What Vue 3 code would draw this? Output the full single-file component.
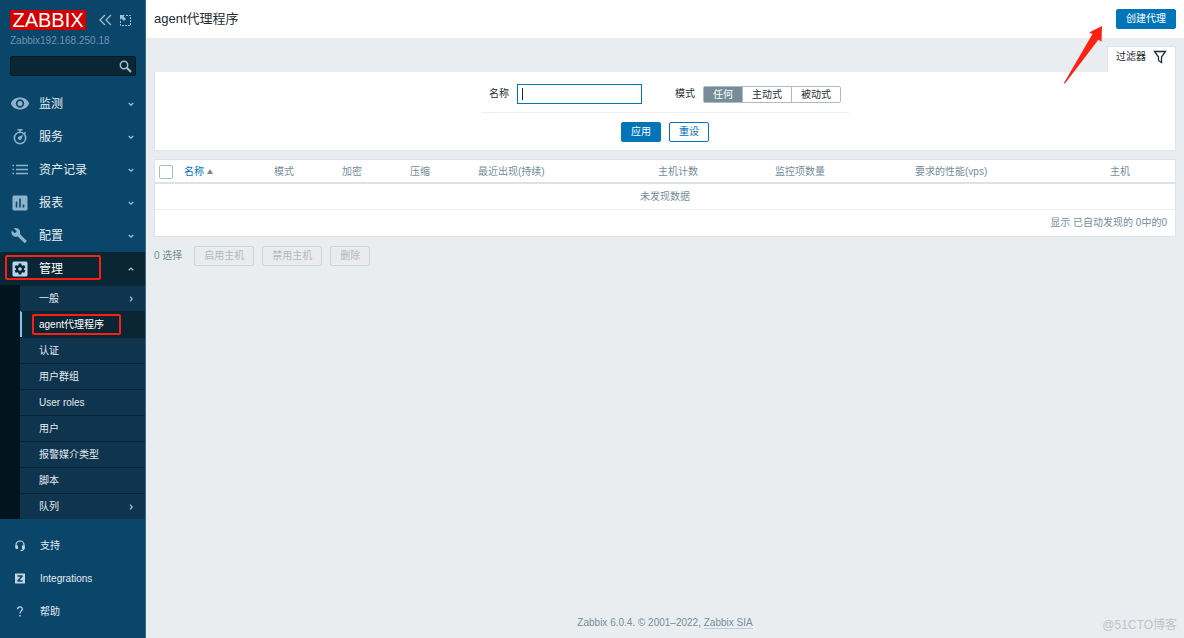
<script setup>
import { ref } from 'vue'

const menu = [
  { icon: 'eye', label: '监测' },
  { icon: 'timer', label: '服务' },
  { icon: 'list', label: '资产记录' },
  { icon: 'chart', label: '报表' },
  { icon: 'wrench', label: '配置' },
  { icon: 'gear', label: '管理', open: true },
]
const submenu = [
  { label: '一般', more: true },
  { label: 'agent代理程序', active: true },
  { label: '认证' },
  { label: '用户群组' },
  { label: 'User roles' },
  { label: '用户' },
  { label: '报警媒介类型' },
  { label: '脚本' },
  { label: '队列', more: true },
]
const support = [
  { icon: 'headset', label: '支持' },
  { icon: 'z', label: 'Integrations' },
  { icon: 'help', label: '帮助' },
]
const modes = ['任何', '主动式', '被动式']
const columns = ['模式', '加密', '压缩', '最近出现(持续)', '主机计数', '监控项数量', '要求的性能(vps)', '主机']
const mode = ref('任何')
const name = ref('')
const search = ref('')
</script>

<template>
  <div class="page">
    <aside class="sidebar">
      <div class="brand">
        <a href="#" class="logo">ZABBIX</a>
        <button class="icon-btn collapse" aria-label="Collapse sidebar">
          <svg width="13" height="12" viewBox="0 0 13 12"><path d="M6 1 1 6l5 5M12 1 7 6l5 5" fill="none" stroke="currentColor" stroke-width="1.2" /></svg>
        </button>
        <button class="icon-btn" aria-label="Hide sidebar">
          <svg width="11" height="11" viewBox="0 0 11 11">
            <path d="M6 .5h4.500v10H.5V6" fill="none" stroke="currentColor" stroke-dasharray="2 1" />
            <path d="M0 0h5L3.500 1.500 6 4 4 6 1.500 3.500 0 5z" fill="currentColor" />
          </svg>
        </button>
      </div>
      <div class="server">Zabbix192.168.250.18</div>
      <form class="search" @submit.prevent>
        <input v-model="search" type="text" aria-label="Search" />
        <button class="icon-btn" aria-label="Run search">
          <svg width="13" height="13" viewBox="0 0 13 13" fill="none" stroke="currentColor"><circle cx="5" cy="5" r="3.700" stroke-width="1.500" /><path d="m7.800 7.800 4.200 4.200" stroke-width="2" /></svg>
        </button>
      </form>

      <nav>
        <ul class="menu">
          <li v-for="m in menu" :key="m.label" :class="{ open: m.open }">
            <a href="#" class="menu-link">
              <svg v-if="m.icon === 'eye'" class="icon" viewBox="0 0 20 20"><path fill="currentColor" fill-rule="evenodd" d="M10 3.500C5.500 3.500 2.200 5.700.8 9.500c1.400 3.800 4.700 6 9.200 6s7.800-2.200 9.200-6C17.800 5.700 14.500 3.500 10 3.500zm0 1.800a4.200 4.200 0 1 1 0 8.400 4.200 4.200 0 0 1 0-8.400z" /><circle cx="10" cy="9.500" r="2.500" fill="currentColor" /></svg>
              <svg v-else-if="m.icon === 'timer'" class="icon" viewBox="0 0 20 20"><g fill="none" stroke="currentColor" stroke-width="1.600"><circle cx="10" cy="11" r="5.700" /><path d="M7.500 2.800h5M10 3v2.500M14.200 6.800l1.400-1.400" /></g><path d="m13 8-1.400 4a1.900 1.900 0 1 1-2.600-2.600z" fill="currentColor" /></svg>
              <svg v-else-if="m.icon === 'list'" class="icon" viewBox="0 0 20 20"><path d="M2.500 5.500H4M2.500 9.500H4M2.500 13.500H4M6 5.500h12M6 9.500h12M6 13.500h12" stroke="currentColor" stroke-width="1.600" /></svg>
              <svg v-else-if="m.icon === 'chart'" class="icon" viewBox="0 0 20 20"><path fill="currentColor" fill-rule="evenodd" d="M4 2.500h12A1.500 1.500 0 0 1 17.500 4v12a1.500 1.500 0 0 1-1.500 1.500H4A1.500 1.500 0 0 1 2.500 16V4A1.500 1.500 0 0 1 4 2.500zm1.700 6v6h1.600v-6zm3.500-3v9h1.600v-9zm3.500 6v3h1.600v-3z" /></svg>
              <svg v-else-if="m.icon === 'wrench'" class="icon" viewBox="0 0 20 20"><path fill="currentColor" d="m17.600 15.200-6.500-6.400c.7-1.700.3-3.600-1-4.900C8.700 2.500 6.700 2.300 5.100 3.100L8 6 6 8 3 5.200C2.200 6.800 2.500 8.800 3.900 10.200c1.300 1.300 3.300 1.700 5 1l6.500 6.300c.3.300.7.300 1 0l1.300-1.400c.3-.3.300-.7-.1-.9z" transform="translate(-1.200 -.7)" /></svg>
              <svg v-else class="icon" viewBox="0 0 20 20"><rect x="2.500" y="2.500" width="15" height="15" rx="1.500" fill="currentColor" /><g stroke="#0a2635" stroke-width="2.800"><path d="M10 4.500v11M5.200 7.200l9.600 5.600M14.800 7.200l-9.600 5.600" /></g><circle cx="10" cy="10" r="4" fill="#0a2635" /><circle cx="10" cy="10" r="1.800" fill="currentColor" /></svg>
              <span>{{ m.label }}</span>
              <svg class="arrow" viewBox="0 0 6 6"><path :d="m.open ? 'M.7 4.200 3 2l2.300 2.200' : 'M.7 2 3 4.200 5.300 2'" fill="none" stroke="currentColor" stroke-width="1.200" /></svg>
            </a>
            <i v-if="m.open" class="mark mark-section"></i>
            <ul v-if="m.open" class="submenu">
              <li v-for="s in submenu" :key="s.label" :class="{ active: s.active }">
                <a href="#">{{ s.label }}
                  <svg v-if="s.more" class="arrow" viewBox="0 0 6 6"><path d="M2 .7 4.200 3 2 5.300" fill="none" stroke="currentColor" stroke-width="1.200" /></svg>
                </a>
                <i v-if="s.active" class="mark mark-page"></i>
              </li>
            </ul>
          </li>
        </ul>
      </nav>

      <ul class="menu support">
        <li v-for="s in support" :key="s.label">
          <a href="#" class="menu-link">
            <svg v-if="s.icon === 'headset'" class="icon" viewBox="0 0 20 20"><path d="M6 10.500V9a4 4 0 0 1 8 0v3c0 1.800-1 2.500-3.500 2.500" fill="none" stroke="currentColor" stroke-width="1.200" /><path d="M5.300 9.500H8V13H6.600a1.300 1.300 0 0 1-1.300-1.300zM14.700 9.500H12V13h2.700z" fill="currentColor" /></svg>
            <svg v-else-if="s.icon === 'z'" class="icon" viewBox="0 0 20 20"><path d="M5 4.500h10v10H5z" fill="currentColor" /><path d="M7.500 7h4.800L7.700 12h4.800" fill="none" stroke="#0a466a" stroke-width="1.500" stroke-linejoin="bevel" /></svg>
            <svg v-else class="icon" viewBox="0 0 20 20"><path d="M7.600 7.200C7.700 4 12.400 4.200 12.300 7c0 1.900-2.300 2-2.300 4.500" fill="none" stroke="currentColor" stroke-width="1.300" /><path d="M9.300 13h1.400v1.500H9.300z" fill="currentColor" /></svg>
            <span>{{ s.label }}</span>
          </a>
        </li>
      </ul>
    </aside>

    <div class="wrapper">
      <header class="header">
        <h1>agent代理程序</h1>
        <button class="btn primary">创建代理</button>
        <svg class="pointer" width="40" height="58" viewBox="0 0 40 58"><path d="M39 0 26 6.500 29.500 8 1 57 1.800 57.700 35.500 13.500 38.500 16z" fill="#ff2012" /></svg>
      </header>

      <main>
        <div class="tabs">
          <a href="#" class="filter-tab">过滤器
            <svg width="14" height="14" viewBox="0 0 14 14"><path d="M1.500 1.500h11L8.500 7v5.500l-3-2V7z" fill="none" stroke="currentColor" stroke-width="1.300" /></svg>
          </a>
        </div>
        <form class="filter" @submit.prevent>
          <div class="fields">
            <label for="filter-name">名称</label>
            <input id="filter-name" v-model="name" class="name" type="text" />
            <span id="mode-label" class="mode-label">模式</span>
            <div class="segments" role="radiogroup" aria-labelledby="mode-label">
              <label v-for="m in modes" :key="m" :class="{ checked: mode === m }">
                <input v-model="mode" type="radio" name="mode" :value="m" />{{ m }}
              </label>
            </div>
          </div>
          <div class="actions">
            <button class="btn primary">应用</button>
            <button class="btn" type="reset">重设</button>
          </div>
        </form>

        <table>
          <colgroup>
            <col class="c-check" /><col class="c-name" /><col class="c-short" /><col class="c-short" /><col class="c-short" />
            <col class="c-seen" /><col class="c-hosts" /><col class="c-items" /><col /><col class="c-last" />
          </colgroup>
          <thead>
            <tr>
              <th><input type="checkbox" aria-label="全选" /></th>
              <th><a href="#">名称<i class="sort"></i></a></th>
              <th v-for="c in columns" :key="c">{{ c }}</th>
            </tr>
          </thead>
          <tbody>
            <tr><td colspan="10" class="empty">未发现数据</td></tr>
            <tr><td colspan="10" class="total">显示 已自动发现的 0中的0</td></tr>
          </tbody>
        </table>

        <div class="bulk">
          <span>0 选择</span>
          <button class="btn" disabled>启用主机</button>
          <button class="btn" disabled>禁用主机</button>
          <button class="btn" disabled>删除</button>
        </div>
      </main>

      <footer>
        Zabbix 6.0.4. © 2001–2022, <a href="#">Zabbix SIA</a>
        <span class="watermark">@51CTO博客</span>
      </footer>
    </div>
  </div>
</template>

<style>
body {
  background: #e9edf0;
}
</style>

<style scoped>
* {
  box-sizing: border-box;
}
.page {
  display: flex;
  min-height: 100vh;
  background: #e9edf0;
  color: #1f2c33;
  font: 10px/14px "Liberation Sans", "Noto Sans CJK SC", sans-serif;
}
a {
  color: inherit;
  text-decoration: none;
}
ul {
  margin: 0;
  padding: 0;
  list-style: none;
}
button,
input {
  margin: 0;
  font: inherit;
}

.sidebar {
  display: flex;
  flex-direction: column;
  flex: none;
  width: 146px;
  padding: 10px 0;
  background: #0a466a;
  border-right: 1px solid #3a6a87;
  color: #e4ebf0;
}
.brand {
  display: flex;
  align-items: center;
  padding: 0 14px 0 10px;
}
.logo {
  width: 76px;
  background: #d40000;
  color: #fff;
  font-size: 20px;
  line-height: 20px;
  text-align: center;
}
.icon-btn {
  display: flex;
  padding: 0;
  border: 0;
  background: none;
  color: #9fc0d4;
}
.collapse {
  margin: 0 8px 0 auto;
}
.server {
  margin: 4px 10px 8px;
  color: #6d95ad;
}
.search {
  display: flex;
  align-items: center;
  margin: 0 9px 11px 10px;
  padding-right: 3px;
  height: 20px;
  background: #0a2635;
  border: 1px solid #061a26;
  border-radius: 2px;
}
.search input {
  flex: 1;
  min-width: 0;
  border: 0;
  background: none;
  color: #fff;
  outline: 0;
}
.menu > li {
  position: relative;
}
.menu-link {
  display: flex;
  align-items: center;
  height: 33px;
  padding: 0 11px 0 10px;
  font-size: 12px;
}
.icon {
  width: 20px;
  height: 20px;
  margin-right: 9px;
  color: #8fb3ca;
}
.arrow {
  width: 6px;
  height: 6px;
  margin-left: auto;
  color: #a9c3d3;
}
.open > .menu-link {
  background: #0a2635;
  color: #fff;
}
.open > .menu-link .icon {
  color: #b9d7ea;
}
.submenu {
  border-left: 20px solid #04141e;
  background: #0f344e;
}
.submenu li {
  position: relative;
}
.submenu a {
  display: flex;
  align-items: center;
  height: 26px;
  padding: 0 11px 0 19px;
  border-top: 1px solid #0a2635;
}
.submenu .active a {
  padding-left: 17px;
  background: #0a2635;
  border-left: 2px solid #7fc4f2;
  color: #fff;
}
.mark {
  position: absolute;
  border: 2px solid #f82015;
  border-radius: 2px;
  pointer-events: none;
}
.mark-section {
  top: 3px;
  left: 5px;
  width: 96px;
  height: 25px;
}
.mark-page {
  top: 3px;
  left: 12px;
  width: 89px;
  height: 21px;
}
.support {
  margin-top: auto;
}
.support .menu-link {
  font-size: 10px;
}
.support .icon {
  margin-right: 10px;
  color: #c3d3dd;
}

.wrapper {
  display: flex;
  flex: 1;
  flex-direction: column;
  min-width: 0;
}
.header {
  position: relative;
  display: flex;
  align-items: center;
  justify-content: space-between;
  height: 38px;
  padding: 0 8px;
  background: #fff;
}
h1 {
  margin: 0;
  font-size: 13px;
  font-weight: 400;
}
.pointer {
  position: absolute;
  z-index: 1;
  top: 26px;
  right: 81px;
  pointer-events: none;
}
.btn {
  height: 20px;
  padding: 0 9px;
  background: #fff;
  border: 1px solid #0275b8;
  border-radius: 2px;
  color: #0275b8;
  line-height: 18px;
}
.btn.primary {
  background: #0275b8;
  color: #fff;
}
.btn:disabled {
  background: #ebebeb;
  border-color: #ccd5d9;
  color: #acbbc2;
}

main {
  flex: 1;
  padding: 8px 8px 0;
}
.tabs {
  display: flex;
  justify-content: flex-end;
}
.filter-tab {
  display: flex;
  align-items: center;
  gap: 7px;
  height: 26px;
  padding: 0 8px 6px;
  background: #fff;
  border: 1px solid #dfe4e7;
  border-bottom: 0;
}
.filter {
  display: flex;
  flex-direction: column;
  align-items: center;
  margin-bottom: 8px;
  padding: 12px 0 8px;
  background: #fff;
  border: 1px solid #dfe4e7;
  border-top: 0;
}
.fields {
  display: flex;
  align-items: center;
  padding: 0 8px 8px;
  border-bottom: 1px solid #ebeef0;
}
.name {
  width: 125px;
  height: 20px;
  margin: 0 33px 0 8px;
  padding: 0 5px;
  background: linear-gradient(#1f2c33, #1f2c33) 4px center / 1px 12px no-repeat #fff;
  border: 1px solid #0275b8;
  outline: 0;
}
.mode-label {
  margin-right: 8px;
}
.segments {
  display: flex;
  border: 1px solid #acbbc2;
  border-radius: 2px;
}
.segments label {
  position: relative;
  padding: 0 9px;
  line-height: 15px;
}
.segments label + label {
  border-left: 1px solid #acbbc2;
}
.segments .checked {
  background: #768d99;
  color: #fff;
}
.segments input {
  position: absolute;
  opacity: 0;
}
.actions {
  display: flex;
  gap: 8px;
  padding-top: 9px;
}

table {
  width: 100%;
  table-layout: fixed;
  border-collapse: separate;
  border-spacing: 0;
  background: #fff;
  border: 1px solid #dfe4e7;
  color: #768d99;
}
.c-check { width: 24px; }
.c-name { width: 90px; }
.c-short { width: 68px; }
.c-last { width: 70px; }
.c-hosts { width: 117px; }
.c-seen { width: 180px; }
.c-items { width: 140px; }
th {
  height: 24px;
  padding: 1px 5px 0;
  border-bottom: 2px solid #dce2e5;
  font-weight: 400;
  text-align: left;
}
th a {
  display: flex;
  align-items: center;
  gap: 3px;
  color: #0275b8;
}
.sort {
  border: 3px solid transparent;
  border-top: 0;
  border-bottom: 5px solid #768d99;
}
th input {
  display: block;
  appearance: none;
  width: 14px;
  height: 14px;
  margin-left: -1px;
  background: #fff;
  border: 1px solid #acbbc2;
  border-radius: 2px;
}
td {
  height: 26px;
  padding: 0 8px;
}
.empty {
  border-bottom: 1px solid #ebeef0;
  text-align: center;
}
.total {
  text-align: right;
}
.bulk {
  display: flex;
  align-items: center;
  gap: 8px;
  padding-top: 9px;
  color: #768d99;
}
.bulk span {
  margin-right: 4px;
}

footer {
  position: relative;
  padding: 8px;
  color: #768d99;
  text-align: center;
}
footer a {
  border-bottom: 1px solid #c2cbd0;
}
.watermark {
  position: absolute;
  right: 7px;
  bottom: 6px;
  color: #c0c4c6;
  font-size: 12px;
}
</style>
